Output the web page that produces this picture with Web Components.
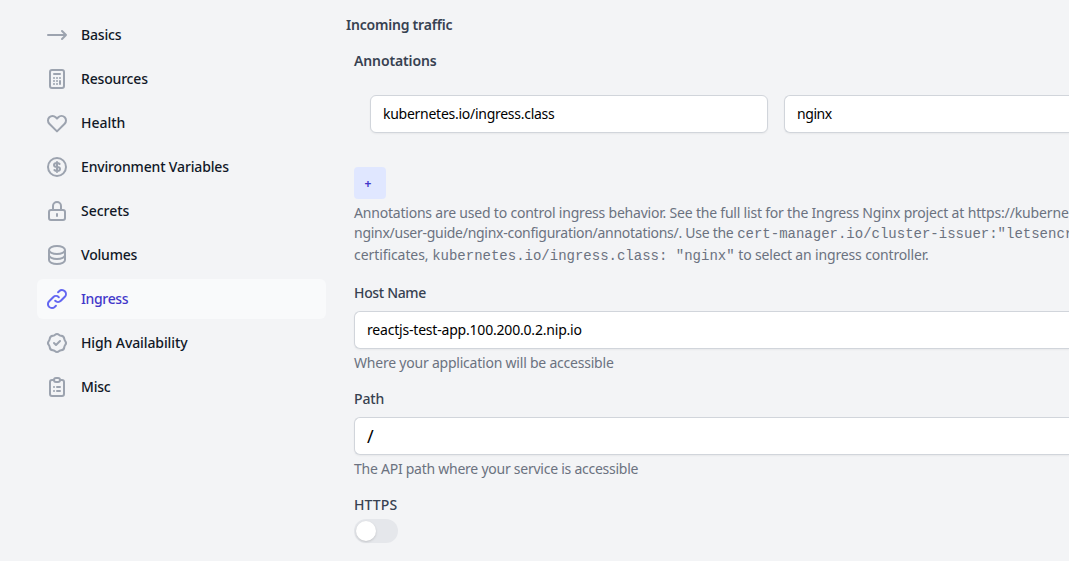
<!DOCTYPE html>
<html lang="en">
<head>
<meta charset="utf-8">
<title>Ingress settings</title>
<style>
html,body{margin:0;height:100%;overflow:hidden;background:#f3f4f6}
body{font:14px/20px "Noto Sans","Open Sans",sans-serif}
</style>
</head>
<body>
<settings-page></settings-page>
<script>
const ICONS={
arrow:'M17 8l4 4m0 0l-4 4m4-4H3',
calculator:'M9 7h6m0 10v-3m-3 3h.01M9 17h.01M9 14h.01M12 14h.01M15 11h.01M12 11h.01M9 11h.01M7 21h10a2 2 0 002-2V5a2 2 0 00-2-2H7a2 2 0 00-2 2v14a2 2 0 002 2z',
heart:'M4.318 6.318a4.5 4.5 0 000 6.364L12 20.364l7.682-7.682a4.5 4.5 0 00-6.364-6.364L12 7.636l-1.318-1.318a4.5 4.5 0 00-6.364 0z',
dollar:'M12 8c-1.657 0-3 .895-3 2s1.343 2 3 2 3 .895 3 2-1.343 2-3 2m0-8c1.11 0 2.08.402 2.599 1M12 8V7m0 1v8m0 0v1m0-1c-1.11 0-2.08-.402-2.599-1M21 12a9 9 0 11-18 0 9 9 0 0118 0z',
lock:'M12 15v2m-6 4h12a2 2 0 002-2v-6a2 2 0 00-2-2H6a2 2 0 00-2 2v6a2 2 0 002 2zm10-10V7a4 4 0 00-8 0v4h8z',
database:'M4 7v10c0 2.21 3.582 4 8 4s8-1.79 8-4V7M4 7c0 2.21 3.582 4 8 4s8-1.79 8-4M4 7c0-2.21 3.582-4 8-4s8 1.79 8 4m0 5c0 2.21-3.582 4-8 4s-8-1.79-8-4',
link:'M13.828 10.172a4 4 0 00-5.656 0l-4 4a4 4 0 105.656 5.656l1.102-1.101m-.758-4.899a4 4 0 005.656 0l4-4a4 4 0 00-5.656-5.656l-1.1 1.1',
badge:'M9 12l2 2 4-4M7.835 4.697a3.42 3.42 0 001.946-.806 3.42 3.42 0 014.438 0 3.42 3.42 0 001.946.806 3.42 3.42 0 013.138 3.138 3.42 3.42 0 00.806 1.946 3.42 3.42 0 010 4.438 3.42 3.42 0 00-.806 1.946 3.42 3.42 0 01-3.138 3.138 3.42 3.42 0 00-1.946.806 3.42 3.42 0 01-4.438 0 3.42 3.42 0 00-1.946-.806 3.42 3.42 0 01-3.138-3.138 3.42 3.42 0 00-.806-1.946 3.42 3.42 0 010-4.438 3.42 3.42 0 00.806-1.946 3.42 3.42 0 013.138-3.138z',
clipboard:'M9 5H7a2 2 0 00-2 2v12a2 2 0 002 2h10a2 2 0 002-2V7a2 2 0 00-2-2h-2M9 5a2 2 0 002 2h2a2 2 0 002-2M9 5a2 2 0 012-2h2a2 2 0 012 2m-3 7h3m-3 4h3m-6-4h.01M9 16h.01'
};
function define(name,html,ready){
  customElements.define(name,class extends HTMLElement{
    constructor(){super();this.attachShadow({mode:'open'}).innerHTML=html;}
    connectedCallback(){if(ready)ready(this,this.shadowRoot);}
  });
}
// Tracks its text so that it sets to the given advance width.
define('fit-text','<style>:host{display:inline-block;white-space:nowrap}</style><slot></slot>',el=>{
  el.style.letterSpacing='0';
  const n=el.textContent.length,w=+el.getAttribute('w');
  el.style.letterSpacing=((w-el.getBoundingClientRect().width)/n).toFixed(4)+'px';
});
define('ui-icon',`<style>:host{display:block;width:24px;height:24px;flex:none}svg{display:block}</style>
<svg width="24" height="24" viewBox="0 0 24 24" fill="none" stroke="currentColor" stroke-width="2" stroke-linecap="round" stroke-linejoin="round"><path/></svg>`,
(el,r)=>r.querySelector('path').setAttribute('d',ICONS[el.getAttribute('name')]));
define('nav-item',`<style>
:host{display:flex;align-items:center;gap:12px;height:40px;padding:0 8px;box-sizing:border-box;border-radius:6px;color:#111827;font-weight:550}
ui-icon{color:#9ca3af}
:host([active]){background:#f9fafb;color:#4338ca}
:host([active]) ui-icon{color:#6366f1}
</style><ui-icon></ui-icon><span><slot></slot></span>`,
(el,r)=>{const i=r.querySelector('ui-icon');i.setAttribute('name',el.getAttribute('icon'));
i.shadowRoot.querySelector('path').setAttribute('d',ICONS[el.getAttribute('icon')]);});
define('side-nav','<style>:host{display:flex;flex-direction:column;gap:4px}</style><slot></slot>');
define('text-field',`<style>
:host{display:flex;align-items:center;box-sizing:border-box;height:38px;padding:0 12px;border:1px solid #d1d5db;border-radius:6px;background:#fff;color:#000;box-shadow:0 1px 2px rgba(0,0,0,.05)}
</style><slot></slot>`);
define('field-label','<style>:host{display:block;height:20px;color:#374151;font-weight:550}</style><slot></slot>');
define('help-text',`<style>:host{display:block;color:#6b7280}
::slotted(div){white-space:nowrap}</style><slot></slot>`);
define('mono-text','<style>:host{font:14px/20px "Liberation Mono",monospace;white-space:pre}</style><slot></slot>');
define('add-button','<style>:host{display:flex;align-items:center;justify-content:center;width:32px;height:32px;box-sizing:border-box;padding:1px 4px 0 0;border-radius:4px;background:#e0e7ff;color:#4338ca;font-size:12px;font-weight:700}</style><slot></slot>');
define('toggle-switch',`<style>:host{display:flex;box-sizing:border-box;width:44px;height:24px;padding:2px;border-radius:12px;background:#e5e7eb}
span{width:20px;height:20px;border-radius:50%;background:#fff;box-shadow:0 1px 3px rgba(0,0,0,.1),0 1px 2px rgba(0,0,0,.06)}</style><span></span>`);
define('settings-page',`<style>
:host{display:grid;grid-template-columns:289px 1fr;column-gap:20px;padding:15px 0 0 37px;width:1069px;height:561px;box-sizing:border-box;overflow:hidden}
section{display:flex;flex-direction:column;min-width:0}
h3{margin:0;font:inherit;font-weight:650;color:#374151;height:20px}
.body{padding-left:8px;display:flex;flex-direction:column}
.wide{border-right:0;border-radius:6px 0 0 6px}
.row{display:flex;gap:16px;padding-left:16px;margin-top:24px}
.row text-field{width:398px;flex:none}
.row text-field.wide{width:auto;flex:1}
</style>
<side-nav>
<nav-item icon="arrow"><fit-text w="40.3">Basics</fit-text></nav-item>
<nav-item icon="calculator"><fit-text w="66.8">Resources</fit-text></nav-item>
<nav-item icon="heart"><fit-text w="44.2">Health</fit-text></nav-item>
<nav-item icon="dollar"><fit-text w="147.8">Environment Variables</fit-text></nav-item>
<nav-item icon="lock"><fit-text w="48.3">Secrets</fit-text></nav-item>
<nav-item icon="database"><fit-text w="56.2">Volumes</fit-text></nav-item>
<nav-item icon="link" active><fit-text w="47.2">Ingress</fit-text></nav-item>
<nav-item icon="badge"><fit-text w="106.5">High Availability</fit-text></nav-item>
<nav-item icon="clipboard"><fit-text w="29.5">Misc</fit-text></nav-item>
</side-nav>
<section>
<h3><fit-text w="106.2">Incoming traffic</fit-text></h3>
<div class="body">
<h3 style="margin-top:16px"><fit-text w="82.5">Annotations</fit-text></h3>
<div class="row"><text-field><fit-text w="171.5">kubernetes.io/ingress.class</fit-text></text-field><text-field class="wide"><fit-text w="34.8">nginx</fit-text></text-field></div>
<add-button style="margin-top:34px">+</add-button>
<help-text style="margin-top:4px">
<div style="height:20px"><fit-text w="610">Annotations are used to control ingress behavior. See the full list for the Ingress Nginx project at</fit-text> <fit-text w="101">https://kuberne</fit-text></div>
<div style="height:22px"><fit-text w="379.5">nginx/user-guide/nginx-configuration/annotations/. Use the</fit-text> <mono-text>cert-manager.io/cluster-issuer:"letsencr</mono-text></div>
<div style="height:20px"><fit-text w="74.5">certificates,</fit-text> <mono-text>kubernetes.io/ingress.class: "nginx"</mono-text> <fit-text w="190.5">to select an ingress controller.</fit-text></div>
</help-text>
<field-label style="margin-top:18px"><fit-text w="72">Host Name</fit-text></field-label>
<text-field class="wide" style="margin-top:8px"><fit-text w="214.8">reactjs-test-app.100.200.0.2.nip.io</fit-text></text-field>
<help-text style="margin-top:4px"><fit-text w="259.6">Where your application will be accessible</fit-text></help-text>
<field-label style="margin-top:16px"><fit-text w="30.2">Path</fit-text></field-label>
<text-field class="wide" style="margin-top:8px"><fit-text w="6" style="font-size:18px">/</fit-text></text-field>
<help-text style="margin-top:4px"><fit-text w="284.2">The API path where your service is accessible</fit-text></help-text>
<field-label style="margin-top:16px"><fit-text w="43.3">HTTPS</fit-text></field-label>
<toggle-switch style="margin-top:4px"></toggle-switch>
</div>
</section>`);
</script>
</body>
</html>
